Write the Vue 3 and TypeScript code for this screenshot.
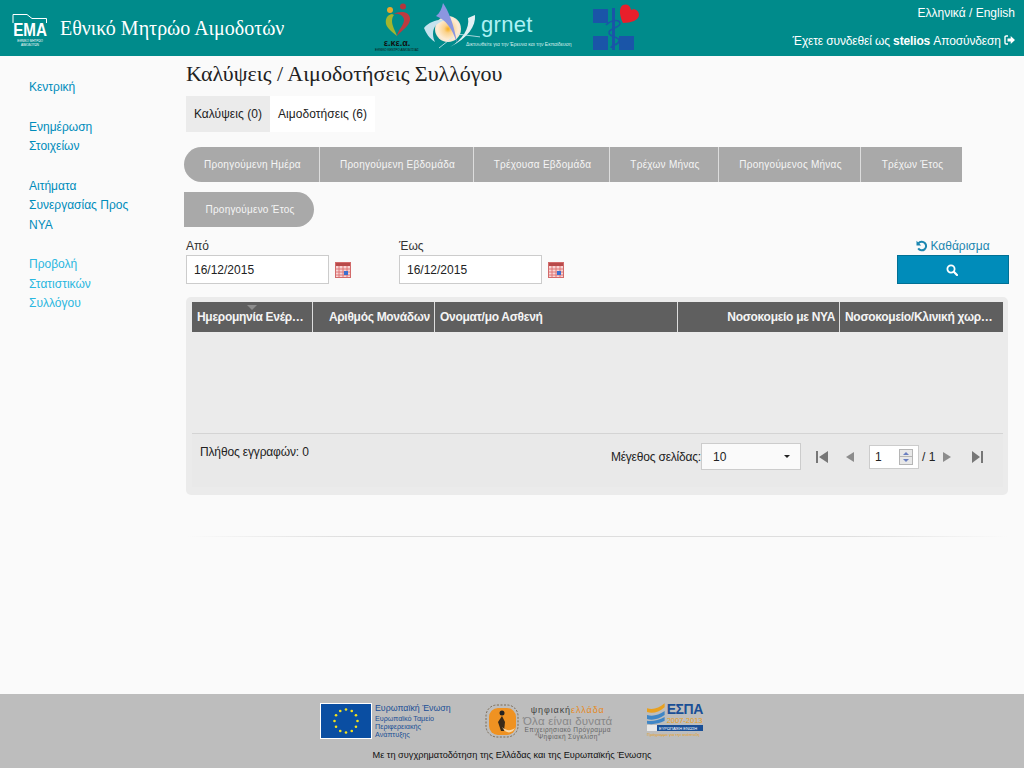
<script setup lang="ts">
const navGroups: string[][] = [
  ['Κεντρική'],
  ['Ενημέρωση', 'Στοιχείων'],
  ['Αιτήματα', 'Συνεργασίας Προς', 'ΝΥΑ'],
  ['Προβολή', 'Στατιστικών', 'Συλλόγου'],
]

const ranges = [
  { label: 'Προηγούμενη Ημέρα', width: 136 },
  { label: 'Προηγούμενη Εβδομάδα', width: 154 },
  { label: 'Τρέχουσα Εβδομάδα', width: 136 },
  { label: 'Τρέχων Μήνας', width: 109 },
  { label: 'Προηγούμενος Μήνας', width: 142 },
  { label: 'Τρέχων Έτος', width: 101 },
]

const columns = [
  { label: 'Ημερομηνία Ενέρ…', width: 121, align: 'left' },
  { label: 'Αριθμός Μονάδων', width: 122, align: 'right' },
  { label: 'Ονοματ/μο Ασθενή', width: 243, align: 'left' },
  { label: 'Νοσοκομείο με ΝΥΑ', width: 162, align: 'right' },
  { label: 'Νοσοκομείο/Κλινική χωρ…', width: 163, align: 'left' },
]

const dateFields = [
  { label: 'Από', value: '16/12/2015' },
  { label: 'Έως', value: '16/12/2015' },
]

const euStars = Array.from({ length: 12 }, (_, i) => {
  const a = (i * Math.PI) / 6
  return { x: 26 + Math.sin(a) * 11.5, y: 18 - Math.cos(a) * 11.5 }
})
</script>

<template>
  <div class="page">
    <header class="topbar">
      <div class="brand">
        <div class="ema-logo">
          <svg width="36" height="14" viewBox="0 0 36 14" class="ema-roof">
            <path d="M1 9V.5h14l5 4h14.500V9" fill="none" stroke="#fff" stroke-width="1" />
          </svg>
          <span class="ema-word">EMA</span>
          <span class="ema-sub">ΕΘΝΙΚΟ ΜΗΤΡΩΟ ΑΙΜΟΔΟΤΩΝ</span>
        </div>
        <span class="brand-name">Εθνικό Μητρώο Αιμοδοτών</span>
      </div>

      <div class="partners">
        <div class="ekea">
          <svg width="27" height="33" viewBox="0 0 27 33">
            <circle cx="6" cy="7" r="3" fill="#e9a92a" />
            <circle cx="19" cy="3.500" r="3" fill="#b4363c" />
            <path d="M8 11c-5 1-7 5-6 10 1 4 6 8 11 12-2-6-5-10-5-15 0-3 1-5 2-6z" fill="#a3b52e" />
            <path d="M10 11c5-3 15-3 16 4 1 7-8 12-13 18 1-6 7-11 7-16 0-4-5-7-10-6z" fill="#bd3a40" />
          </svg>
          <span class="ekea-name">ε.κε.α.</span>
          <span class="ekea-sub">ΕΘΝΙΚΟ ΚΕΝΤΡΟ ΑΙΜΟΔΟΣΙΑΣ</span>
        </div>

        <div class="grnet">
          <svg width="56" height="50" viewBox="0 0 56 50" class="grnet-mark">
            <defs>
              <radialGradient id="sun" cx="0.5" cy="0.5" r="0.5">
                <stop offset="0" stop-color="#f7ae1d" />
                <stop offset="0.3" stop-color="#fbd28c" />
                <stop offset="0.8" stop-color="#fdebd3" />
                <stop offset="1" stop-color="#f7e6d2" />
              </radialGradient>
            </defs>
            <circle cx="24" cy="27" r="13" fill="url(#sun)" />
            <path d="M0 26C5 20 13 17 22 18 14 20 9 24 9 32c0 3 1 6 2 8C5 36 2 31 0 26z" fill="#c5e3ee" />
            <path d="M19 1c5 7 11 21 14 40C28 26 22 18 12 14c4-3 6-8 7-13z" fill="#8b96e0" />
            <path d="M51 13C52 24 44 36 26 45 38 38 46 26 44 16z" fill="#e4f1f4" />
            <path d="M33 32l24 3M15 46l14-11" stroke="#cfe8ef" stroke-width="0.800" />
          </svg>
          <div class="grnet-text">
            <span class="grnet-name">grnet</span>
            <span class="grnet-sub">Δικτυωθείτε για την Έρευνα και την Εκπαίδευση</span>
          </div>
        </div>

        <svg width="48" height="47" viewBox="0 0 48 47" class="ministry">
          <path d="M0 6h15v14H0zM0 33h15v14H0zM26 33h15v14H26z" fill="#1a55a8" />
          <path d="M19 5h3v42h-3z" fill="#1a55a8" />
          <path d="M13 22c5-5 13-6 14-2 1 5-12 5-11 10s11 3 10 8-8 3-8 7" fill="none" stroke="#1a55a8" stroke-width="1.500" />
          <path d="M30 20C27 14 26 8 28 4c3-4 9-3 10 3 4-2 8 1 8 5 0 5-8 8-16 8z" fill="#e81f2b" />
        </svg>
      </div>

      <div class="session">
        <div class="languages">Ελληνικά / English</div>
        <div class="user-line">
          Έχετε συνδεθεί ως <strong>stelios</strong> Αποσύνδεση
          <svg width="11" height="10" viewBox="0 0 11 10">
            <path d="M4 1H2.200C1.500 1 1 1.500 1 2.200v5.600C1 8.500 1.500 9 2.200 9H4" fill="none" stroke="#fff" stroke-width="1.400" />
            <path d="M3.500 3.600h3.200V1L11 5 6.700 9V6.400H3.500z" fill="#fff" />
          </svg>
        </div>
      </div>
    </header>

    <div class="body-row">
      <nav class="sidebar">
        <ul v-for="(group, g) in navGroups" :key="g" :class="{ active: g === 3 }">
          <li v-for="item in group" :key="item">{{ item }}</li>
        </ul>
      </nav>

      <main class="content">
        <h1>Καλύψεις / Αιμοδοτήσεις Συλλόγου</h1>

        <div class="tabs">
          <span class="tab selected">Καλύψεις (0)</span>
          <span class="tab">Αιμοδοτήσεις (6)</span>
        </div>

        <div class="range-row">
          <button
            v-for="range in ranges"
            :key="range.label"
            class="range-btn"
            :style="{ width: range.width + 'px' }"
          >
            {{ range.label }}
          </button>
        </div>
        <div class="range-row second">
          <button class="range-btn last-range">Προηγούμενο Έτος</button>
        </div>

        <div class="filters">
          <div v-for="field in dateFields" :key="field.label" class="date-field">
            <label>{{ field.label }}</label>
            <div class="date-input">
              <div class="input-box">{{ field.value }}</div>
              <svg width="16" height="16" viewBox="0 0 16 16" class="calendar">
                <rect x="0.500" y="0.500" width="15" height="15" fill="#f8d4d4" stroke="#d26a6a" />
                <rect x="1" y="1" width="14" height="3" fill="#b84a4a" />
                <path d="M1 7h14M1 10h14M1 13h14M4 4v11M8 4v11M12 4v11" stroke="#dc6f6f" stroke-width="0.900" />
                <rect x="9" y="9" width="4" height="4" fill="#3a6fd0" />
              </svg>
            </div>
          </div>
          <div class="search-col">
            <a class="reset">
              <svg width="12" height="12" viewBox="0 0 12 12">
                <path d="M2.400 3.400A4.300 4.300 0 1 1 2.200 8.400" fill="none" stroke="#1b86b0" stroke-width="2" />
                <path d="M.5 .8v4.700h4.700z" fill="#1b86b0" />
              </svg>
              Καθάρισμα
            </a>
            <button class="search-btn">
              <svg width="12" height="12" viewBox="0 0 12 12">
                <circle cx="5" cy="5" r="3.600" fill="none" stroke="#fff" stroke-width="1.800" />
                <path d="M7.800 7.800l3.200 3.200" stroke="#fff" stroke-width="2.200" stroke-linecap="round" />
              </svg>
            </button>
          </div>
        </div>

        <section class="grid">
          <div class="grid-head">
            <div
              v-for="(col, i) in columns"
              :key="col.label"
              class="grid-col"
              :class="col.align"
              :style="{ width: col.width + 'px' }"
            >
              <span v-if="i === 0" class="sort-mark"></span>
              <span class="col-label">{{ col.label }}</span>
            </div>
          </div>
          <div class="grid-body"></div>
          <div class="grid-foot">
            <span class="total">Πλήθος εγγραφών: 0</span>
            <div class="pager">
              <span class="size-label">Μέγεθος σελίδας:</span>
              <div class="size-select">
                <span>10</span>
                <i class="caret"></i>
              </div>
              <div class="pager-nav">
                <svg width="12" height="12" viewBox="0 0 12 12" class="first"><path d="M0 0h2v12H0zM12 0v12L3 6z" fill="#777" /></svg>
                <svg width="8" height="12" viewBox="0 0 8 12" class="prev"><path d="M8 1v10L0 6z" fill="#8c8c8c" /></svg>
                <div class="page-input">
                  <span>1</span>
                  <div class="spinner">
                    <i class="up"></i>
                    <i class="down"></i>
                  </div>
                </div>
                <span class="page-count">/ 1</span>
                <svg width="8" height="12" viewBox="0 0 8 12" class="next"><path d="M0 1v10l8-5z" fill="#8c8c8c" /></svg>
                <svg width="11" height="12" viewBox="0 0 11 12" class="end"><path d="M9 0h2v12H9zM0 0v12l8-6z" fill="#777" /></svg>
              </div>
            </div>
          </div>
        </section>

        <hr class="divider" />
      </main>
    </div>

    <footer class="site-footer">
      <div class="funders">
        <div class="eu">
          <svg width="52" height="36" viewBox="0 0 52 36">
            <rect x="0.500" y="0.500" width="51" height="35" fill="#0a4ea2" stroke="#fff" />
            <circle v-for="(s, i) in euStars" :key="i" :cx="s.x" :cy="s.y" r="1.300" fill="#f6e21c" />
          </svg>
          <div class="eu-text">
            <strong>Ευρωπαϊκή Ένωση</strong>
            <span>Ευρωπαϊκό Ταμείο</span>
            <span>Περιφερειακής</span>
            <span>Ανάπτυξης</span>
          </div>
        </div>

        <div class="digital">
          <svg width="36" height="36" viewBox="0 0 36 36">
            <rect x="2" y="2" width="32" height="32" rx="11" fill="none" stroke="#7a6a55" stroke-dasharray="2 1.500" />
            <rect x="5" y="5" width="27" height="27" rx="9" fill="#ef9222" />
            <circle cx="18" cy="10" r="2.500" fill="#222" />
            <path d="M18 13l-4 6 3 9h3l1-9z" fill="#3a2a18" />
            <path d="M18 24c4 4 9 4 13 1-2 5-9 7-13-1z" fill="#f9d9a8" />
          </svg>
          <div class="digital-text">
            <span class="dg-title">ψηφιακή<b>ελλάδα</b></span>
            <span class="dg-slogan">Όλα είναι δυνατά</span>
            <span class="dg-small">Επιχειρησιακό Πρόγραμμα</span>
            <span class="dg-small">"Ψηφιακή Σύγκλιση"</span>
          </div>
        </div>

        <div class="espa">
          <div class="espa-top">
            <svg width="18" height="22" viewBox="0 0 18 22">
              <path d="M0 5C6 7 12 5 18 0v4C12 9 6 11 0 9z" fill="#e8a020" />
              <path d="M0 12c6 2 12 0 18-4v4c-6 4-12 6-18 4zM0 18c6 1 12-1 18-4v4c-6 3-12 4-18 3z" fill="#3f86c6" />
            </svg>
            <div class="espa-words">
              <span class="espa-name">ΕΣΠΑ</span>
              <span class="espa-years">2007-2013</span>
            </div>
          </div>
          <div class="espa-band">
            <i></i><span>ΕΥΡΩΠΑΪΚΗ ΕΝΩΣΗ</span>
          </div>
          <span class="espa-note">Πρόγραμμα για την ανάπτυξη</span>
        </div>
      </div>
      <p class="cofund">Με τη συγχρηματοδότηση της Ελλάδας και της Ευρωπαϊκής Ένωσης</p>
    </footer>
  </div>
</template>

<style>
html,
body {
  margin: 0;
  background: #fafafa;
}
</style>

<style scoped>
.page {
  display: flex;
  flex-direction: column;
  min-height: 768px;
  font-family: "Liberation Sans", Arial, sans-serif;
  font-size: 12px;
  color: #333;
  background: #fafafa;
}

.topbar {
  display: flex;
  height: 56px;
  background: #008b8b;
  color: #fff;
}

.brand {
  display: flex;
  align-items: flex-start;
  width: 375px;
  padding: 14px 0 0 12px;
  box-sizing: border-box;
}

.ema-logo {
  position: relative;
  display: flex;
  flex-direction: column;
  width: 36px;
  height: 33px;
}

.ema-roof {
  position: absolute;
  top: 0;
  left: 0;
}

.ema-word {
  align-self: center;
  margin-top: 7px;
  font-size: 19px;
  line-height: 17px;
  font-weight: 700;
  transform: scaleX(0.8);
}

.ema-sub {
  margin-top: 2px;
  font-size: 3px;
  line-height: 3.5px;
  text-align: center;
}

.brand-name {
  margin: 3px 0 0 12px;
  font-family: "Liberation Serif", "Times New Roman", serif;
  font-size: 20px;
  line-height: 22px;
  white-space: nowrap;
}

.partners {
  display: flex;
  align-items: flex-start;
  width: 265px;
}

.ekea {
  display: flex;
  flex-direction: column;
  align-items: center;
  width: 44px;
  flex: none;
  padding-top: 3px;
  color: #111;
}

.ekea svg {
  display: block;
}

.ekea-name {
  font-size: 9px;
  font-weight: 700;
  line-height: 7px;
  margin-top: 4px;
}

.ekea-sub {
  font-size: 3px;
  line-height: 6px;
  white-space: nowrap;
}

.grnet {
  display: flex;
  flex: none;
  margin-left: 5px;
  width: 164px;
}

.grnet-mark {
  margin-top: 2px;
  flex: none;
}

.grnet-text {
  display: flex;
  flex-direction: column;
  margin-top: 13px;
}

.grnet-name {
  font-size: 22px;
  line-height: 24px;
  color: #aef2f5;
  letter-spacing: 0.3px;
  margin-left: 1px;
}

.grnet-sub {
  margin: 4px 0 0 -14px;
  font-size: 5px;
  line-height: 6px;
  white-space: nowrap;
  color: #d8f0ee;
}

.ministry {
  margin: 3px 0 0 5px;
  flex: none;
}

.session {
  flex: 1;
  padding: 6px 9px 0 0;
  text-align: right;
}

.languages {
  line-height: 15px;
  margin-bottom: 13px;
}

.user-line {
  line-height: 15px;
  white-space: nowrap;
  letter-spacing: -0.14px;
}

.body-row {
  display: flex;
}

.sidebar {
  width: 186px;
  flex: none;
  padding: 9.2px 0 0 29px;
  box-sizing: border-box;
}

.sidebar ul {
  list-style: none;
  margin: 13px 0 20.1px;
  padding: 0;
  color: #008cba;
  line-height: 19.5px;
}

.sidebar ul.active {
  color: #2ab7e0;
}

.content {
  width: 822px;
  flex: none;
}

h1 {
  margin: 3px 0 8px;
  font-family: "Liberation Serif", "Times New Roman", serif;
  font-size: 22px;
  line-height: 29px;
  font-weight: 400;
  color: #222;
}

.tabs {
  display: flex;
  height: 36px;
}

.tab {
  display: flex;
  align-items: center;
  justify-content: center;
  width: 105px;
  background: #fff;
  color: #222;
  letter-spacing: 0.06px;
}

.tab.selected {
  width: 84px;
  background: #ebebeb;
}

.range-row {
  display: flex;
  margin: 15px 0 0 -2px;
}

.range-row.second {
  margin-top: 10px;
}

.range-btn {
  height: 35px;
  padding: 0 0 0 2px;
  border: 0;
  border-right: 1px solid #ddd;
  box-sizing: border-box;
  background: #a9a9a9;
  color: #f5f5f5;
  font-family: inherit;
  font-size: 10px;
  letter-spacing: 0.25px;
  white-space: nowrap;
}

.range-btn:first-child {
  border-radius: 18px 0 0 18px;
}

.range-btn:last-child {
  border-right: 0;
}

.range-btn.last-range {
  width: 130px;
  letter-spacing: 0.2px;
  border-radius: 0 18px 18px 0;
}

.filters {
  display: flex;
  margin-top: 10px;
}

.date-field {
  width: 213px;
  flex: none;
}

.date-field label {
  display: block;
  line-height: 18px;
}

.date-input {
  display: flex;
  align-items: center;
  gap: 6px;
}

.input-box {
  width: 143px;
  height: 29px;
  box-sizing: border-box;
  padding: 1px 7px 0;
  border: 1px solid #ccc;
  background: #fff;
  color: #222;
  line-height: 27px;
}

.calendar {
  flex: none;
  margin-top: 1px;
}

.search-col {
  display: flex;
  flex-direction: column;
  align-items: center;
  flex: none;
  width: 112px;
  margin-left: 285px;
}

.reset {
  display: flex;
  align-items: center;
  gap: 2px;
  height: 18px;
  color: #1b86b0;
}

.search-btn {
  display: flex;
  align-items: center;
  justify-content: center;
  width: 112px;
  height: 29px;
  padding: 0 2px 0 0;
  border: 1px solid #007095;
  background: #008cba;
}

.grid {
  margin-top: 13px;
  height: 198px;
  padding: 5px 5px 8px 6px;
  box-sizing: border-box;
  display: flex;
  flex-direction: column;
  border-radius: 5px;
  background: #ebebeb;
}

.grid-head {
  display: flex;
  height: 30px;
  background: #5f5f5f;
  color: #f4f4f4;
  font-weight: 700;
  letter-spacing: -0.3px;
}

.grid-col {
  position: relative;
  display: flex;
  align-items: center;
  box-sizing: border-box;
  padding: 0 4px 0 5px;
  border-right: 1px solid #ddd;
}

.grid-col:last-child {
  border-right: 0;
}

.grid-col.right {
  justify-content: flex-end;
}

.col-label {
  white-space: nowrap;
}

.sort-mark {
  position: absolute;
  top: 3px;
  left: 55px;
  border-left: 5px solid transparent;
  border-right: 5px solid transparent;
  border-top: 5px solid #8d8d8d;
}

.grid-body {
  height: 101px;
  border-bottom: 1px solid #d4d4d4;
}

.grid-foot {
  flex: 1;
  display: flex;
  justify-content: space-between;
  padding: 11px 20px 0 8px;
  background: #e9e9e9;
}

.total {
  color: #222;
  letter-spacing: -0.15px;
}

.pager {
  display: flex;
  align-items: flex-start;
  color: #222;
}

.size-label {
  margin-top: 5px;
  letter-spacing: -0.2px;
}

.size-select {
  display: flex;
  align-items: center;
  justify-content: space-between;
  width: 100px;
  height: 27px;
  box-sizing: border-box;
  margin-top: -2px;
  padding: 0 10px 0 11px;
  border: 1px solid #ccc;
  background: #fafafa;
}

.caret {
  border-left: 3px solid transparent;
  border-right: 3px solid transparent;
  border-top: 3px solid #222;
}

.pager-nav {
  display: flex;
  align-items: center;
  height: 25px;
  margin-top: -1px;
}

.first {
  margin-left: 15px;
}

.prev {
  margin-left: 18px;
}

.page-input {
  display: flex;
  align-items: center;
  justify-content: space-between;
  width: 50px;
  height: 24px;
  box-sizing: border-box;
  margin-left: 15px;
  padding: 0 5px;
  border: 1px solid #ccc;
  background: #fff;
}

.spinner {
  display: flex;
  flex-direction: column;
  width: 14px;
  height: 16px;
  box-sizing: border-box;
  border: 1px solid #b5b5b5;
  background: #e8e8e8;
}

.spinner i {
  flex: 1;
  position: relative;
}

.spinner .up {
  border-bottom: 1px solid #b5b5b5;
}

.spinner .up::after,
.spinner .down::after {
  content: "";
  position: absolute;
  left: 3px;
  top: 2px;
  border-left: 3px solid transparent;
  border-right: 3px solid transparent;
}

.spinner .up::after {
  border-bottom: 3px solid #6a7fc0;
}

.spinner .down::after {
  border-top: 3px solid #6a7fc0;
}

.page-count {
  width: 12px;
  margin-left: 3px;
  white-space: nowrap;
}

.next {
  margin-left: 9px;
}

.end {
  margin-left: 21px;
}

.divider {
  height: 1px;
  margin: 41px 0 0;
  border: 0;
  background: linear-gradient(to right, #fafafa, #dedede 20%, #dedede 80%, #fafafa);
}

.site-footer {
  display: flex;
  flex-direction: column;
  margin-top: auto;
  height: 74px;
  background: #bdbdbd;
}

.funders {
  display: flex;
  align-items: flex-start;
  height: 55px;
  padding: 9px 0 0 320px;
  box-sizing: border-box;
}

.eu {
  display: flex;
  width: 164px;
}

.eu-text {
  display: flex;
  flex-direction: column;
  margin-left: 3px;
  color: #1a4f96;
  font-size: 7.2px;
  line-height: 8px;
}

.eu-text strong {
  margin-bottom: 1px;
  font-size: 8.8px;
  font-weight: 400;
  line-height: 11px;
}

.digital {
  display: flex;
  width: 163px;
}

.digital-text {
  display: flex;
  flex-direction: column;
  align-items: center;
  margin-left: 3px;
  padding-top: 2px;
  color: #666;
}

.dg-title {
  font-size: 9px;
  line-height: 10px;
  letter-spacing: 0.9px;
  color: #444;
}

.dg-title b {
  font-weight: 400;
  color: #e58a1f;
}

.dg-slogan {
  font-size: 11.5px;
  line-height: 12px;
  letter-spacing: 0.2px;
  color: #888;
}

.dg-small {
  font-size: 6.5px;
  line-height: 6.5px;
  letter-spacing: 0.4px;
}

.espa {
  display: flex;
  flex-direction: column;
  width: 56px;
}

.espa-top {
  display: flex;
  gap: 2px;
}

.espa-words {
  display: flex;
  flex-direction: column;
}

.espa-name {
  font-size: 14px;
  line-height: 13px;
  font-weight: 700;
  letter-spacing: -0.4px;
  color: #1a4f96;
}

.espa-years {
  font-size: 7.5px;
  line-height: 9px;
  color: #e8a020;
}

.espa-band {
  display: flex;
  align-items: center;
  height: 6px;
  background: #1a4f96;
  color: #fff;
  font-size: 4px;
  white-space: nowrap;
  overflow: hidden;
}

.espa-band i {
  flex: none;
  width: 10px;
  height: 6px;
  margin-right: 2px;
  background: #e8e8e8;
}

.espa-note {
  font-size: 4px;
  line-height: 7px;
  color: #e8a020;
  white-space: nowrap;
}

.cofund {
  margin: 0;
  text-align: center;
  font-size: 9.2px;
  line-height: 13px;
  color: #111;
}
</style>
